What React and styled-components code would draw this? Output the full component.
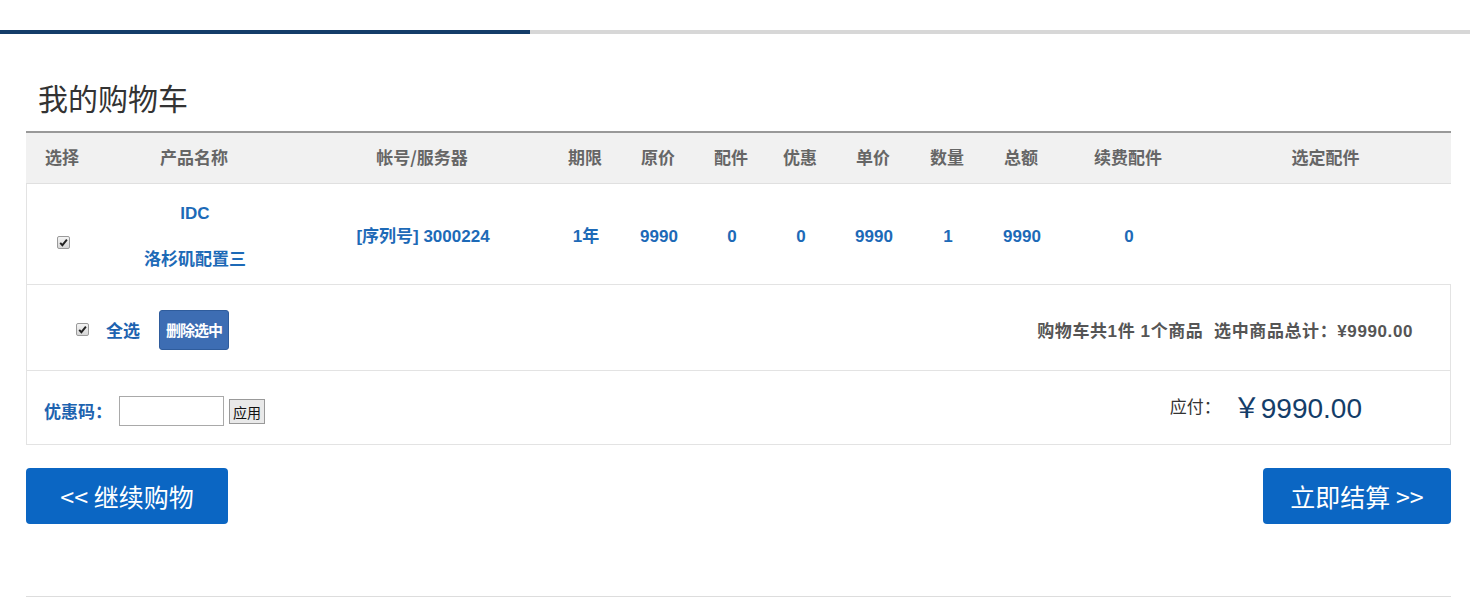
import React from "react";
import styled, { createGlobalStyle } from "styled-components";

const GlobalStyle = createGlobalStyle`
  html, body { margin: 0; padding: 0; background: #fff; }
  body { font-family: "Liberation Sans", "Noto Sans CJK SC", sans-serif; color: #333; }
  * { box-sizing: border-box; }
`;

const ProgressTrack = styled.div`
  margin-top: 30px;
  height: 4px;
  background: #d7d7d7;
  display: flex;
`;

const ProgressFill = styled.div`
  width: ${(p) => p.$width}px;
  background: #143d69;
`;

const Page = styled.div`
  padding: 0 19px 0 26px;
`;

const Title = styled.h1`
  margin: 43px 0 14px 12px;
  font-family: "Noto Sans CJK SC", sans-serif;
  font-weight: 400;
  font-size: 30px;
  line-height: 40px;
  color: #333;
`;

const COLS = "72px 192px 264px 62px 84px 62px 76px 70px 78px 70px 144px 1fr";

const HeaderRow = styled.div`
  display: grid;
  grid-template-columns: ${COLS};
  height: 53px;
  border-top: 2px solid #999;
  border-bottom: 1px solid #e0e0e0;
  background: #f1f1f1;
`;

const HeadCell = styled.div`
  display: flex;
  align-items: center;
  justify-content: center;
  padding-bottom: 4px;
  font-family: "Noto Sans CJK SC", sans-serif;
  font-weight: 700;
  font-size: 17px;
  color: #666;
`;

const BodyRow = styled.div`
  display: grid;
  grid-template-columns: ${COLS};
  height: 101px;
  border-left: 1px solid #e3e3e3;
  border-bottom: 1px solid #e3e3e3;
`;

const Cell = styled.div`
  display: flex;
  flex-direction: column;
  align-items: center;
  justify-content: center;
  padding-top: ${(p) => p.$pt ?? 6}px;
  gap: ${(p) => p.$gap || 0}px;
  font-family: "Liberation Sans", "Noto Sans CJK SC", sans-serif;
  font-weight: 700;
  font-size: 17px;
  line-height: 22px;
  color: #1d6ab7;
`;

const FooterRow = styled.div`
  display: flex;
  align-items: center;
  height: ${(p) => p.$h}px;
  padding: ${(p) => p.$pt || 0}px ${(p) => p.$pr}px 0 ${(p) => p.$pl}px;
  border-left: 1px solid #e3e3e3;
  border-right: 1px solid #e3e3e3;
  border-bottom: 1px solid #e3e3e3;
`;

const Group = styled.div`
  display: flex;
  align-items: ${(p) => p.$align || "center"};
  padding-bottom: ${(p) => p.$pb || 0}px;
`;

const Spacer = styled.div`
  flex: 1;
`;

const BoxWrap = styled.span`
  display: inline-flex;
  align-items: center;
  justify-content: center;
  width: 13px;
  height: 13px;
  border: 1px solid #9a9a9a;
  border-radius: 2px;
  background: linear-gradient(#f4f4f4, #d6d6d6);
  margin-right: ${(p) => p.$mr || 0}px;
`;

const Checkbox = ({ mr }) => (
  <BoxWrap $mr={mr}>
    <svg width="9" height="9" viewBox="0 0 9 9">
      <path d="M1.2 4.8 L3.4 7.2 L7.9 1.6" fill="none" stroke="#222" strokeWidth="1.9" />
    </svg>
  </BoxWrap>
);

const BlueLabel = styled.span`
  font-family: "Noto Sans CJK SC", sans-serif;
  font-weight: 700;
  font-size: 17px;
  color: #1d63b0;
  margin-right: ${(p) => p.$mr || 0}px;
`;

const DeleteButton = styled.button`
  width: 70px;
  height: 40px;
  padding: 0;
  border: 1px solid #2f5c9c;
  border-radius: 3px;
  background: #3d6db3;
  color: #fff;
  font-family: "Noto Sans CJK SC", sans-serif;
  font-weight: 700;
  font-size: 15px;
  letter-spacing: -1px;
`;

const Summary = styled.span`
  font-family: "Liberation Sans", "Noto Sans CJK SC", sans-serif;
  font-weight: 700;
  font-size: 17px;
  letter-spacing: 0.6px;
  color: #555;
  white-space: pre;
`;

const CouponInput = styled.input`
  width: 105px;
  height: 30px;
  margin-left: 7px;
  border: 1px solid #a9a9a9;
  padding: 0 4px;
`;

const SmallButton = styled.button`
  height: 25px;
  margin-left: 5px;
  margin-top: 2px;
  padding: 0 3px;
  border: 1px solid #999;
  background: #e9e9e9;
  font-family: "Noto Sans CJK SC", sans-serif;
  font-size: 14px;
  color: #111;
  line-height: 1;
`;

const PayLabel = styled.span`
  font-family: "Noto Sans CJK SC", serif;
  font-size: 17px;
  color: #333;
  margin-right: 12px;
`;

const PayAmount = styled.span`
  font-family: "Liberation Sans", "Noto Sans CJK SC", sans-serif;
  font-size: 28px;
  color: #143d69;
`;

const ActionBar = styled.div`
  display: flex;
  justify-content: space-between;
  margin-top: 23px;
`;

const BigButton = styled.button`
  width: ${(p) => p.$w}px;
  height: 56px;
  border: none;
  border-radius: 4px;
  background: #0b66c3;
  color: #fff;
  font-family: "Noto Sans CJK SC", sans-serif;
  font-size: 25px;
  padding: 0;
`;

const BottomRule = styled.hr`
  margin: 72px 0 0;
  border: none;
  border-top: 1px solid #ddd;
`;

const headers = ["选择", "产品名称", "帐号/服务器", "期限", "原价", "配件", "优惠", "单价", "数量", "总额", "续费配件", "选定配件"];

export default function App() {
  return (
    <>
      <GlobalStyle />
      <ProgressTrack>
        <ProgressFill $width={530} />
      </ProgressTrack>
      <Page>
        <Title>我的购物车</Title>
        <HeaderRow>
          {headers.map((h) => (
            <HeadCell key={h}>{h}</HeadCell>
          ))}
        </HeaderRow>
        <BodyRow>
          <Cell $pt={16}>
            <Checkbox />
          </Cell>
          <Cell $gap={24}>
            <span>IDC</span>
            <span>洛杉矶配置三</span>
          </Cell>
          <Cell>[序列号] 3000224</Cell>
          <Cell>1年</Cell>
          <Cell>9990</Cell>
          <Cell>0</Cell>
          <Cell>0</Cell>
          <Cell>9990</Cell>
          <Cell>1</Cell>
          <Cell>9990</Cell>
          <Cell>0</Cell>
          <Cell />
        </BodyRow>
        <FooterRow $h={86} $pt={4} $pl={49} $pr={37}>
          <Group>
            <Checkbox mr={17} />
            <BlueLabel $mr={19}>全选</BlueLabel>
            <DeleteButton>删除选中</DeleteButton>
          </Group>
          <Spacer />
          <Summary>购物车共1件 1个商品  选中商品总计：¥9990.00</Summary>
        </FooterRow>
        <FooterRow $h={74} $pt={6} $pl={17} $pr={88}>
          <Group>
            <BlueLabel>优惠码：</BlueLabel>
            <CouponInput type="text" />
            <SmallButton>应用</SmallButton>
          </Group>
          <Spacer />
          <Group $pb={10}>
            <PayLabel>应付：</PayLabel>
            <PayAmount>￥9990.00</PayAmount>
          </Group>
        </FooterRow>
        <ActionBar>
          <BigButton $w={202}>&lt;&lt; 继续购物</BigButton>
          <BigButton $w={188}>立即结算 &gt;&gt;</BigButton>
        </ActionBar>
        <BottomRule />
      </Page>
    </>
  );
}
